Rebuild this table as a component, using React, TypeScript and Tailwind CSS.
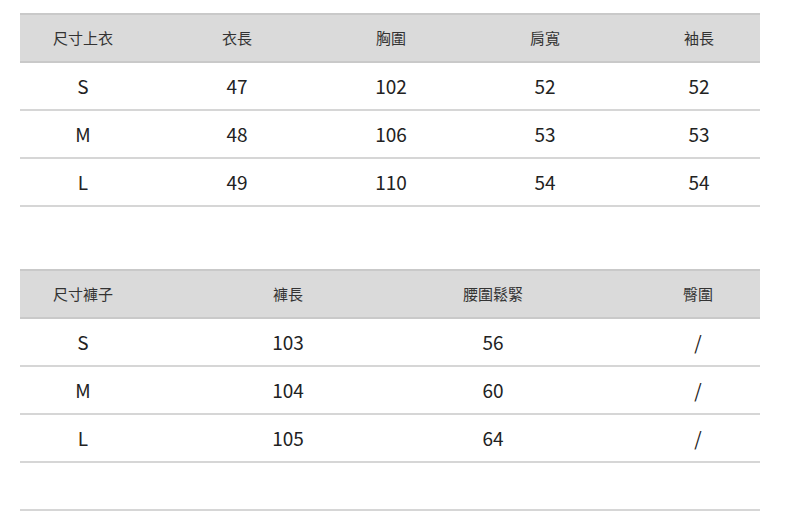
const font = { fontFamily: '"Noto Sans CJK TC", "Noto Sans", sans-serif' }

const topHead = ["尺寸上衣", "衣長", "胸圍", "肩寬", "袖長"]
const topRows = [
  ["S", "47", "102", "52", "52"],
  ["M", "48", "106", "53", "53"],
  ["L", "49", "110", "54", "54"],
]

const bottomHead = ["尺寸褲子", "褲長", "腰圍鬆緊", "臀圍"]
const bottomRows = [
  ["S", "103", "56", "/"],
  ["M", "104", "60", "/"],
  ["L", "105", "64", "/"],
]

const SizeTable = ({
  head,
  rows,
  gap,
  extraRow,
}: {
  head: string[]
  rows: string[][]
  gap: string
  extraRow?: boolean
}) => (
  <div className="w-[740px]">
    <div
      className={`flex h-[50px] items-center border-t-2 border-b-2 border-[#c9c9c9] bg-[#dadada] pl-[3px] ${gap}`}
    >
      {head.map((h) => (
        <div key={h} className="w-[120px] text-center text-[15px] text-[#333]">
          {h}
        </div>
      ))}
    </div>
    {rows.map((row) => (
      <div
        key={row[0]}
        className={`flex h-[48px] items-center border-b-2 border-[#d6d6d6] pl-[3px] ${gap}`}
      >
        {row.map((cell, i) => (
          <div key={i} className="w-[120px] text-center text-[19px] text-[#222]">
            {cell}
          </div>
        ))}
      </div>
    ))}
    {extraRow && <div className="h-[48px] border-b-2 border-[#d6d6d6]" />}
  </div>
)

export default function App() {
  return (
    <div className="h-[518px] w-[790px] bg-white pl-5 pt-[13px]" style={font}>
      <SizeTable head={topHead} rows={topRows} gap="gap-[34px]" />
      <div className="h-[62px]" />
      <SizeTable head={bottomHead} rows={bottomRows} gap="gap-[85px]" extraRow />
    </div>
  )
}
